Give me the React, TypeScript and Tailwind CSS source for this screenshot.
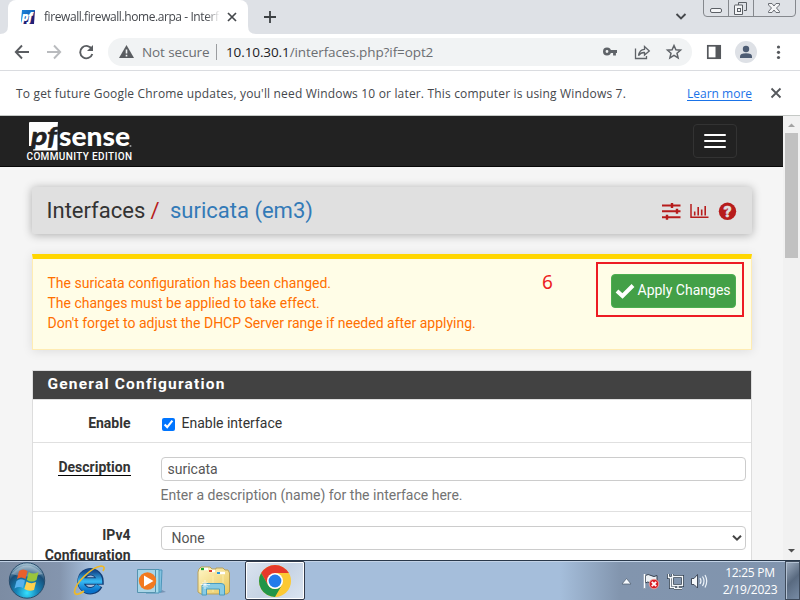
import React from "react";

const UI = "font-['Open_Sans','Noto_Sans',sans-serif]";

function BrowserTabs() {
  return (
    <div className="flex h-[34px] shrink-0 bg-[#dee1e6]">
      <svg className="h-[34px] w-[8px]" viewBox="0 0 8 34">
        <path d="M8 26 Q8 34 0 34 H8Z" fill="#fff" />
      </svg>
      <div className="flex h-[34px] w-[240px] items-center rounded-t-[8px] bg-white pl-[12px]">
        <svg className="h-[16px] w-[16px] shrink-0" viewBox="0 0 16 16">
          <defs>
            <linearGradient id="fav" x1="0" y1="0" x2="1" y2="1">
              <stop offset="0" stopColor="#1b84dc" />
              <stop offset="0.5" stopColor="#1667bd" />
              <stop offset="0.55" stopColor="#1e1e72" />
              <stop offset="1" stopColor="#24207c" />
            </linearGradient>
          </defs>
          <path d="M2 1H15L14 15H2L1 12Z" fill="url(#fav)" />
          <text x="1.500" y="11.5" fontSize="12" fontWeight="800" fontStyle="italic" letterSpacing="-1" fill="#fff" fontFamily="Open Sans">pf</text>
        </svg>
        <div className="ml-[8px] w-[176px] overflow-hidden whitespace-nowrap text-[12px] leading-[16px] tracking-[-0.42px] text-[#45484d] [mask-image:linear-gradient(to_right,black_92%,transparent)]">
          firewall.firewall.home.arpa - Interf
        </div>
        <svg className="ml-[7px] h-[10px] w-[10px]" viewBox="0 0 10 10" stroke="#45484c" strokeWidth="1.7">
          <path d="M1 1 9 9M9 1 1 9" />
        </svg>
      </div>
      <svg className="h-[34px] w-[40px]" viewBox="0 0 40 34">
        <path d="M0 26 Q0 34 8 34 H0Z" fill="#fff" />
        <path d="M16 17H28M22 11V23" stroke="#3c4043" strokeWidth="1.8" />
      </svg>
      <div className="flex-1" />
      <svg className="h-[34px] w-[127px]" viewBox="673 0 127 34" fill="none">
        <path d="M676.5 14 681 18.5 685.5 14" stroke="#45484c" strokeWidth="1.9" />
        <path d="M703.5 -1V13Q703.500 16.500 707 16.500H792Q795.500 16.500 795.500 13V-1M728.500 0V16M753.500 0V16" stroke="#85888d" />
        <rect x="710.500" y="8.500" width="11" height="4" rx="1.500" stroke="#5c6066" fill="#f4f5f7" />
        <path d="M738.500 5V2.500H746.500V10.500H744" stroke="#5c6066" />
        <path d="M734.500 5.500Q734.500 5 735 5H742.500V14.500H734.500Z" stroke="#5c6066" fill="#f4f5f7" />
        <rect x="737.500" y="8.500" width="3" height="3" stroke="#5c6066" />
        <path d="M768.500 3.500H772L774 6 776 3.500H779.500V5L776.500 8 779.500 11.500V12.500H776L774 10 772 12.500H768.500V11.500L771.500 8 768.500 5Z" stroke="#5c6066" fill="#f4f5f7" strokeWidth=".9" />
      </svg>
    </div>
  );
}

function Toolbar() {
  return (
    <div className="flex h-[37px] shrink-0 items-center border-b border-[#dadce0] bg-white">
      <svg className="h-[36px] w-[108px]" viewBox="0 34 108 36" fill="none" stroke="#5a5d61" strokeWidth="1.9">
        <path d="M29 52H16M22 45.500 15.800 52 22 58.500" />
        <path d="M47 52H60M54 45.500 60.200 52 54 58.500" stroke="#b9bbbe" />
        <path d="M92 49.500A6.200 6.200 0 1 0 92.300 54" />
        <path d="M93 45V51H87Z" fill="#5a5d61" stroke="none" />
      </svg>
      <div className="flex h-[28px] w-[584px] items-center rounded-full bg-[#f1f3f4] pl-[11px]">
        <svg className="h-[14px] w-[15px]" viewBox="0 0 15 14">
          <path d="M7.500 0 15 13H0Z" fill="#5a5d61" />
          <path d="M7.500 4.500V8.500M7.500 9.800V11.500" stroke="#f1f3f4" strokeWidth="1.600" />
        </svg>
        <span className="ml-[8px] w-[68px] whitespace-nowrap text-[13.5px] tracking-[-0.1px] text-[#6b6e72]">Not secure</span>
        <span className="ml-[6px] h-[16px] w-px bg-[#9b9da0]" />
        <span className="ml-[9px] whitespace-nowrap text-[13.5px] tracking-[-0.1px] text-[#6b6e72]">
          <span className="text-[#202124]">10.10.30.1</span>/interfaces.php?if=opt2
        </span>
        <div className="flex-1" />
        <svg className="h-[28px] w-[92px]" viewBox="600 38 92 28" fill="none" stroke="#5f6368" strokeWidth="1.300">
          <circle cx="607" cy="51.500" r="2.700" strokeWidth="2.600" />
          <path d="M610 51.500H617M614.500 51V55.500" strokeWidth="2.800" />
          <path d="M635.500 48.500V58.500H646.500V56" />
          <path d="M638.500 55.500Q639.500 49.500 644.500 49.300V46.500L649.300 51 644.500 55V52.500Q641 52.200 638.500 55.500Z" />
          <path d="M674 45.500 675.900 49.800 680.500 50.200 677 53.200 678.100 57.800 674 55.300 669.900 57.800 671 53.200 667.500 50.200 672.100 49.800Z" strokeWidth="1.500" />
        </svg>
      </div>
      <svg className="h-[36px] w-[108px]" viewBox="692 34 108 36" fill="none">
        <rect x="707.800" y="45.800" width="12.400" height="12.400" stroke="#55585c" strokeWidth="1.700" />
        <path d="M715.500 45V59H721V45Z" fill="#55585c" />
        <circle cx="746" cy="52" r="11" fill="#dee1e6" />
        <circle cx="746" cy="49" r="3.200" fill="#4d5c73" />
        <path d="M740 58V56.500Q740 53.200 746 53.200T752 56.500V58Z" fill="#4d5c73" />
        <g fill="#55585c">
          <circle cx="778.500" cy="47" r="1.600" />
          <circle cx="778.500" cy="52.300" r="1.600" />
          <circle cx="778.500" cy="57.500" r="1.600" />
        </g>
      </svg>
    </div>
  );
}

function InfoBar() {
  return (
    <div className="flex h-[45px] shrink-0 items-center border-b border-[#c5c9c6] bg-white pl-[16px] text-[12px] text-[#45484d]">
      <span className="w-[671px] whitespace-nowrap pt-px tracking-[0.172px]">
        To get future Google Chrome updates, you'll need Windows 10 or later. This computer is using Windows 7.
      </span>
      <span className="w-[65px] whitespace-nowrap pt-px text-[#1a73e8] underline underline-offset-2">Learn more</span>
      <svg className="ml-[18px] h-[12px] w-[12px]" viewBox="0 0 12 12" stroke="#55585c" strokeWidth="1.800">
        <path d="M1.500 1.500 10.500 10.500M10.500 1.500 1.500 10.500" />
      </svg>
    </div>
  );
}

function NavBar() {
  return (
    <div className="flex h-[51px] shrink-0 items-center justify-between border-b border-[#080808] bg-[#222] pl-[26px] pr-[46px]">
      <svg className="h-[50px] w-[112px]" viewBox="26 116 112 50">
        <path d="M30 122H58L57.500 128V150.500H33L34 146H29V123Q29 122 30 122Z" fill="#fff" />
        <text x="31" y="145" fontSize="25" fontWeight="700" fontStyle="italic" fontFamily="Lato" fill="#222" stroke="#222" strokeWidth=".6" textLength="26" lengthAdjust="spacingAndGlyphs">pf</text>
        <text x="59" y="145.500" fontSize="27" fontWeight="900" fontFamily="Lato" fill="#fff" textLength="71" lengthAdjust="spacingAndGlyphs">sense</text>
        <circle cx="130.500" cy="146" r="1" fill="#999" />
        <text x="26.500" y="160" fontSize="10" fontWeight="500" fontFamily="Roboto" fill="#fff" textLength="105.500" lengthAdjust="spacing">COMMUNITY EDITION</text>
      </svg>
      <button className="flex h-[34px] w-[44px] flex-col items-center justify-center gap-[4px] rounded-[4px] border border-[#333]">
        <span className="h-[2px] w-[22px] rounded-[1px] bg-white" />
        <span className="h-[2px] w-[22px] rounded-[1px] bg-white" />
        <span className="h-[2px] w-[22px] rounded-[1px] bg-white" />
      </button>
    </div>
  );
}

function PageHeader() {
  return (
    <div className="mt-[20px] flex h-[47px] shrink-0 items-center rounded-[2px] bg-[#e0e0e0] pl-[14.500px] text-[22px] shadow-[0_1px_10px_rgba(0,0,0,0.3)]">
      <span className="w-[104px] whitespace-nowrap text-[#333]">Interfaces</span>
      <span className="w-[19.5px] text-[#b71c1c]">/</span>
      <span className="whitespace-nowrap text-[#337ab7]">suricata (em3)</span>
      <div className="flex-1" />
      <svg className="mr-[15px] h-[20px] w-[76px]" viewBox="661 201 76 20">
        <g stroke="#b71c1c" fill="none">
          <path d="M662 205.500H680.500M662 211.300H680.500M662 217.200H680.500" strokeWidth="2" />
          <path d="M672 203V208M677 208.800V213.800M667 214.700V219.700" strokeWidth="2.400" />
          <path d="M691 204V217.300H708.500" strokeWidth="1.500" />
          <path d="M694.700 211.500V215.500M698.200 207V215.500M701.700 209.500V215.500M705.200 206V215.500" strokeWidth="1.600" />
        </g>
        <circle cx="727.500" cy="211.300" r="8.700" fill="#b71c1c" />
        <text x="727.500" y="216.800" textAnchor="middle" fontSize="15" fontWeight="900" fontFamily="Roboto" fill="#e0e0e0" stroke="#e0e0e0" strokeWidth=".6">?</text>
      </svg>
    </div>
  );
}

function Alert() {
  return (
    <div className="mt-[20px] flex h-[96px] shrink-0 border border-t-[5px] border-[#ffecb3] border-t-[#ffd600] bg-[#fffde7] pl-[14px] text-[14px] text-[#ff6f00] shadow-[0_1px_10px_rgba(0,0,0,0.1)]">
      <div className="mt-[14px] w-[495px] whitespace-nowrap pl-[0.5px] leading-[20px]">
        <div>The suricata configuration has been changed.</div>
        <div>The changes must be applied to take effect.</div>
        <div>Don't forget to adjust the DHCP Server range if needed after applying.</div>
      </div>
      <div className="mt-[9px] w-[54px] font-['Noto_Sans',sans-serif] text-[19px] leading-[28px] text-[#ed1c24]">6</div>
      <div className="mt-[3px] h-[55px] w-[148px] border-2 border-[#ed1c24] pl-[13px] pt-[10px]">
        <button className="flex h-[34px] w-[125px] items-center rounded-[4px] border border-[#4caf50] bg-[#43a047] pl-[3px] text-white">
          <svg className="h-[16px] w-[20px]" viewBox="0 0 20 16">
            <path d="M2 8 7.500 13 18 2.500" fill="none" stroke="#fff" strokeWidth="4" />
          </svg>
          <span className="ml-[2.5px] -mt-[2px] whitespace-nowrap leading-[20px]">Apply Changes</span>
        </button>
      </div>
    </div>
  );
}

function ConfigPanel() {
  return (
    <div className="mt-[20px] flex h-[230px] shrink-0 flex-col border border-[#ddd] bg-white text-[14px] text-[#333]">
      <div className="flex h-[28px] shrink-0 items-center bg-[#424242] pl-[14.500px] text-[15.5px] font-bold tracking-[1.2px] text-white">
        General Configuration
      </div>
      <div className="flex h-[44px] shrink-0 items-center border-y border-[#e0e0e0] pt-[5px]">
        <b className="w-[97.5px] text-right">Enable</b>
        <input type="checkbox" defaultChecked className="ml-[31.5px] mt-[2px] h-[13px] w-[13px]" />
        <span className="ml-[6.500px] whitespace-nowrap">Enable interface</span>
      </div>
      <div className="flex h-[69px] shrink-0 border-b border-[#e0e0e0]">
        <div className="w-[97.5px] pt-[14px] text-right">
          <b className="inline-block h-[18px] border-b border-black leading-[18px]">Description</b>
        </div>
        <div className="ml-[30.5px] mt-[14px] w-[585px]">
          <input defaultValue="suricata" className="block h-[24px] w-full rounded-[4px] border border-[#ccc] bg-white px-[5.5px] text-[14px] text-[#555]" />
          <div className="-ml-[0.5px] mt-[4px] leading-[20px] text-[#737373]">Enter a description (name) for the interface here.</div>
        </div>
      </div>
      <div className="flex">
        <b className="w-[97.5px] pt-[13px] text-right leading-[20px]">
          IPv4 Configuration
        </b>
        <div className="relative ml-[30.5px] mt-[14px] w-[585px]">
          <select className="block h-[24px] w-full appearance-none rounded-[4px] border border-[#ccc] bg-white px-[9.500px] text-[14px] text-[#555]">
            <option>None</option>
          </select>
          <svg className="absolute right-[4px] top-[8px] h-[8px] w-[10px]" viewBox="0 0 10 8">
            <path d="M1 1.700 5 5.700 9 1.700" fill="none" stroke="#444" strokeWidth="2" />
          </svg>
        </div>
      </div>
    </div>
  );
}

function ScrollBar() {
  return (
    <div className="flex w-[17px] shrink-0 flex-col items-center bg-[#f1f1f1]">
      <svg className="h-[17px] w-[17px]" viewBox="0 0 17 17"><path d="M5 11H12L8.500 7.500Z" fill="#a3a3a3" /></svg>
      <div className="h-[125px] w-[13px] bg-[#c1c1c1]" />
      <div className="flex-1" />
      <svg className="h-[17px] w-[17px]" viewBox="0 0 17 17"><path d="M5 6H12L8.500 9.500Z" fill="#505050" /></svg>
    </div>
  );
}

function TaskBar() {
  return (
    <div className="flex h-[40px] shrink-0 border-t border-[#29384a] bg-[linear-gradient(to_right,#7c8ca3_0px,#8495ae_60px,#a5bedb_90px,#a5bedb_560px,#8295ae_620px,#8094ae_100%)] shadow-[inset_0_1px_0_#c2d2e6]">
      <svg className="h-[39px] w-[245px]" viewBox="0 561 245 39">
        <defs>
          <radialGradient id="orb" cx=".5" cy=".85" r=".85">
            <stop offset="0" stopColor="#35e0ff" />
            <stop offset=".35" stopColor="#1786b9" />
            <stop offset=".7" stopColor="#184d77" />
            <stop offset="1" stopColor="#b5cfdd" />
          </radialGradient>
          <linearGradient id="ie" x1="0" y1="0" x2="0" y2="1">
            <stop offset="0" stopColor="#164e92" />
            <stop offset=".5" stopColor="#38baf3" />
            <stop offset="1" stopColor="#0873cb" />
          </linearGradient>
          <linearGradient id="folder" x1="0" y1="0" x2="1" y2="1">
            <stop offset="0" stopColor="#fff6c5" />
            <stop offset="1" stopColor="#e9c85e" />
          </linearGradient>
        </defs>
        <circle cx="27" cy="580.500" r="17.700" fill="url(#orb)" stroke="#284d6d" />
        <path d="M11.500 574Q27 557 42.500 574Q28 579 11.500 574Z" fill="#fff" opacity=".3" />
        <path d="M19 571Q23 568 27.500 571L25.500 579Q21 576 17 579Z" fill="#e9602b" />
        <path d="M28.800 572Q33 575 38.500 572L36.500 580Q32 583 26.800 580Z" fill="#9ac43b" />
        <path d="M16.500 581Q20 578 25 580.500L23 588Q19 586 14.500 588.500Z" fill="#57b1ec" />
        <path d="M26.500 581.500Q31 584.500 36 582L34 590Q29 592 24.300 589Z" fill="#ffd14d" />

        <path d="M99 585.500A9.500 9.500 0 1 1 100 581H84" fill="none" stroke="#123f78" strokeWidth="7.400" />
        <path d="M98.500 585.500A9.500 9.500 0 1 1 99.500 581H83" fill="none" stroke="url(#ie)" strokeWidth="5.400" />
        <path d="M103 571Q106 566 101 566C92 567 75 583 74.500 592Q75.500 597 84 591" fill="none" stroke="#eeb928" strokeWidth="1.700" />

        <path d="M160 593 166 592 162 590Z" fill="#7893b3" />
        <path d="M149 570H162L161 592H148Z" fill="#83c3e0" stroke="#4b96ba" />
        <path d="M146 569.500H159V593H146Z" fill="#a6dbea" stroke="#4b96ba" />
        <path d="M137.500 569.500H155.500V592.500H137.500Z" fill="#a8d5e7" stroke="#5593ae" />
        <circle cx="147.500" cy="581" r="8.700" fill="#f27a20" />
        <path d="M144 575.500V586.500L153.500 581Z" fill="#fff" />

        <path d="M199 569 201 567H210L212 569H216V568H223L225 570H228L229.500 573V592L227 594H201L198 592V572Z" fill="url(#folder)" stroke="#b9a15a" />
        <path d="M201 569H208M209 571H215M217 573H225" stroke="#fff" strokeWidth="2.500" />
        <path d="M201 569H204" stroke="#20a82c" strokeWidth="2.300" />
        <path d="M209 571H212" stroke="#db4230" strokeWidth="2" />
        <path d="M217 573H220" stroke="#2999df" strokeWidth="2" />
        <path d="M213 576V592M223 575V592" stroke="#fff4b5" opacity=".7" />
        <path d="M202 595V586Q202 583.500 205 583.500H221Q224.500 583.500 224.500 586V595H219.500V589H206.500V595Z" fill="#88cbe4" stroke="#4a9cbe" />
        <path d="M205 580V589M200.500 584.500H210M202.500 582 207.500 587M207.500 582 202.500 587" stroke="#fff" strokeWidth=".7" />
      </svg>
      <div className="flex h-[39px] w-[60px] items-center justify-center rounded-[2px] border border-[#30394a] bg-[linear-gradient(135deg,#dbe4ef,#c6d3e4_50%,#dbe5f1)] shadow-[inset_0_0_0_1px_white]">
        <svg className="h-[32px] w-[32px]" viewBox="0 0 32 32">
          <circle cx="16" cy="16" r="16" fill="#fcc934" />
          <path d="M16 8H29.856A16 16 0 0 0 2.144 8L9.072 20Z" fill="#e6392b" />
          <path d="M22.928 20 16 32A16 16 0 0 1 2.144 8L9.072 20A8 8 0 0 0 22.928 20Z" fill="#229548" />
          <circle cx="16" cy="16" r="8" fill="#fff" />
          <circle cx="16" cy="16" r="6.400" fill="#247bea" />
        </svg>
      </div>
      <div className="flex-1" />
      <svg className="h-[39px] w-[95px]" viewBox="620 561 95 39" fill="none">
        <path d="M622 584 626.500 578.500 631 584Z" fill="#f7fbff" stroke="#4b596b" strokeWidth=".7" />
        <path d="M644.500 574V589M645.500 575.500Q648 573.500 651 575.500T657 575.500V583Q653.500 585 650.500 583T645.500 583Z" fill="#edf1f5" stroke="#35404f" strokeWidth="1" />
        <path d="M644.500 574V588.500" stroke="#fff" strokeWidth="1.500" />
        <circle cx="654" cy="584" r="4.800" fill="#d91e24" stroke="#f1b1a8" strokeWidth=".8" />
        <path d="M651.800 581.800 656.200 586.200M656.200 581.800 651.800 586.200" stroke="#fff" strokeWidth="1.800" />
        <path d="M672.500 576.500H682.500V585.500H672.500ZM674 588.500H682M678 586V588M668.500 574V577.500H672.500V574M670.500 577.500V587.500H675" stroke="#2e3c4d" strokeWidth="3" />
        <path d="M672.500 576.500H682.500V585.500H672.500ZM674 588.500H682M678 586V588M668.500 574V577.500H672.500V574M670.500 577.500V587.500H675" stroke="#f4f7fa" strokeWidth="1.400" />
        <path d="M691.500 578.500H694L697.500 574.500V588L694 584.500H691.500Z" fill="#f6f9fb" stroke="#35404f" strokeWidth=".9" />
        <path d="M700 578Q702 581 700 584M702.500 576.500Q705.500 581 702.500 586M705 575Q708.500 581 705 587.500" stroke="#edf3f9" strokeWidth="1.200" />
      </svg>
      <div className="flex w-[70px] flex-col items-center pt-[3px] text-[12px] leading-[17px] tracking-[-0.25px] text-white">
        <span className="whitespace-nowrap">12:25 PM</span>
        <span className="whitespace-nowrap">2/19/2023</span>
      </div>
      <div className="w-[15px] border border-[#3e4b5c] bg-[linear-gradient(135deg,#a0afc2,#596a80_50%,#778ba5)] shadow-[inset_1px_1px_0_#b3c1d2]" />
    </div>
  );
}

export default function App() {
  return (
    <div className={`flex h-[600px] w-[800px] flex-col overflow-hidden bg-white ${UI}`}>
      <BrowserTabs />
      <Toolbar />
      <InfoBar />
      <div className="flex h-[444px] shrink-0 overflow-hidden font-[Roboto,sans-serif]">
        <div className="flex w-[783px] flex-col overflow-hidden bg-[#f5f5f5]">
          <NavBar />
          <div className="flex flex-col pl-[32px] pr-[31px]">
            <PageHeader />
            <Alert />
            <ConfigPanel />
          </div>
        </div>
        <ScrollBar />
      </div>
      <TaskBar />
    </div>
  );
}
